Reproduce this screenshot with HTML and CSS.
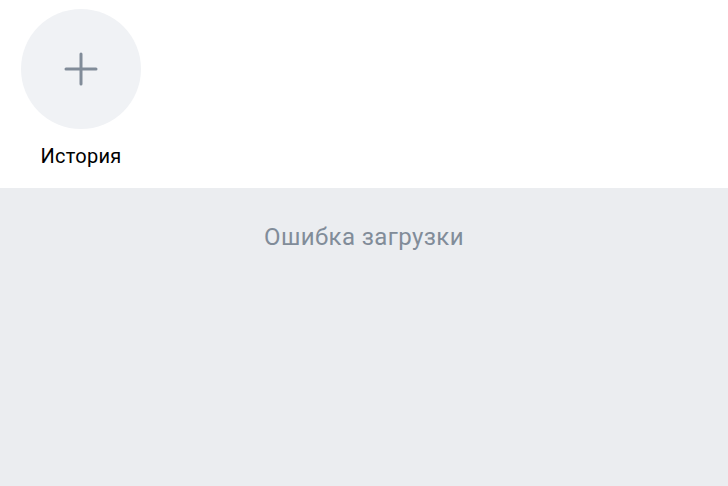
FILE: index.html
```html
<!DOCTYPE html>
<html lang="ru">
<head>
<meta charset="utf-8">
<link rel="stylesheet" href="styles.css">
</head>
<body>
<div class="stories">
  <div class="story">
    <div class="avatar">
      <svg width="34" height="34" viewBox="0 0 34 34"><path d="M17 2v30M2 17h30" stroke="#818c99" stroke-width="3" stroke-linecap="round" fill="none"/></svg>
    </div>
    <div class="label">История</div>
  </div>
</div>
<div class="feed">
  <div class="error">Ошибка загрузки</div>
</div>
</body>
</html>
```
FILE: styles.css
```css
html, body { margin: 0; padding: 0; height: 100%; }
body {
  font-family: Roboto, "Noto Sans", sans-serif;
  background: #ebedf0;
  display: flex;
  flex-direction: column;
}
.stories {
  background: #fff;
  height: 188px;
  padding: 9px 0 0 21px;
  box-sizing: border-box;
  flex: none;
}
.story {
  width: 120px;
  display: flex;
  flex-direction: column;
  align-items: center;
}
.avatar {
  width: 120px;
  height: 120px;
  border-radius: 50%;
  background: #f0f2f5;
  display: flex;
  align-items: center;
  justify-content: center;
}
.label {
  margin-top: 15px;
  font-size: 20px;
  line-height: 24px;
  letter-spacing: 0.3px;
  color: #000;
}
.feed {
  flex: 1;
  display: flex;
  justify-content: center;
  padding-top: 34px;
}
.error {
  font-size: 24px;
  line-height: 30px;
  letter-spacing: 0.4px;
  color: #818c99;
  height: 30px;
}
```
